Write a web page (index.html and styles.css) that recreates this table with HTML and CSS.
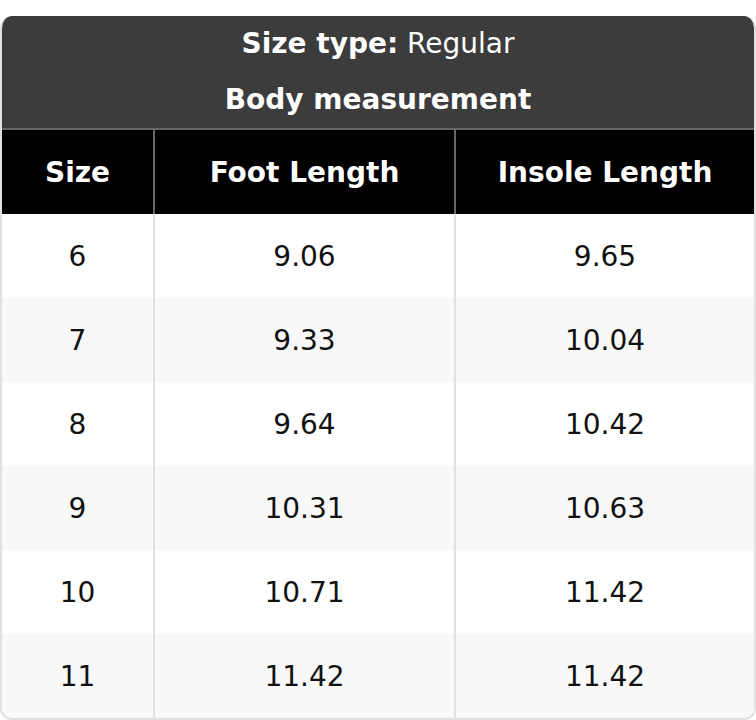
FILE: index.html
```html
<!DOCTYPE html>
<html>
<head>
<meta charset="utf-8">
<link rel="stylesheet" href="styles.css">
</head>
<body>
<div class="chart">
  <div class="chart-head">
    <div class="head-line"><strong>Size type:</strong> Regular</div>
    <div class="head-line"><strong>Body measurement</strong></div>
  </div>
  <table class="size-table">
    <thead>
      <tr><th class="c1">Size</th><th class="c2">Foot Length</th><th class="c3">Insole Length</th></tr>
    </thead>
    <tbody>
      <tr><td>6</td><td>9.06</td><td>9.65</td></tr>
      <tr><td>7</td><td>9.33</td><td>10.04</td></tr>
      <tr><td>8</td><td>9.64</td><td>10.42</td></tr>
      <tr><td>9</td><td>10.31</td><td>10.63</td></tr>
      <tr><td>10</td><td>10.71</td><td>11.42</td></tr>
      <tr><td>11</td><td>11.42</td><td>11.42</td></tr>
    </tbody>
  </table>
</div>
</body>
</html>
```
FILE: styles.css
```css
html, body {
  margin: 0;
  padding: 0;
  background: #fff;
}
body {
  padding-top: 16px;
  font-family: "DejaVu Sans", sans-serif;
  font-size: 28px;
  color: #111;
}
.chart {
  width: 756px;
  box-sizing: border-box;
  border: 2px solid #e0e0e0;
  border-top: none;
  border-radius: 12px;
  overflow: hidden;
}
.chart-head {
  background: #3c3c3c;
  color: #fff;
  text-align: center;
  border-bottom: 2px solid #666;
  margin: 0 -2px;
}
.head-line {
  height: 56px;
  line-height: 56px;
}
.size-table {
  width: 100%;
  border-collapse: collapse;
  table-layout: fixed;
}
.size-table th {
  background: #000;
  color: #fff;
  font-weight: bold;
  height: 84px;
  padding: 0;
  border-left: 2px solid #666;
}
.size-table th.c1 { width: 151px; border-left: none; }
.size-table th.c2 { width: 299px; }
.size-table td {
  height: 84px;
  padding: 0;
  text-align: center;
  border-left: 2px solid #e0e0e0;
}
.size-table td:first-child { border-left: none; }
.size-table tbody tr:nth-child(even) td { background: #f8f8f8; }
```
